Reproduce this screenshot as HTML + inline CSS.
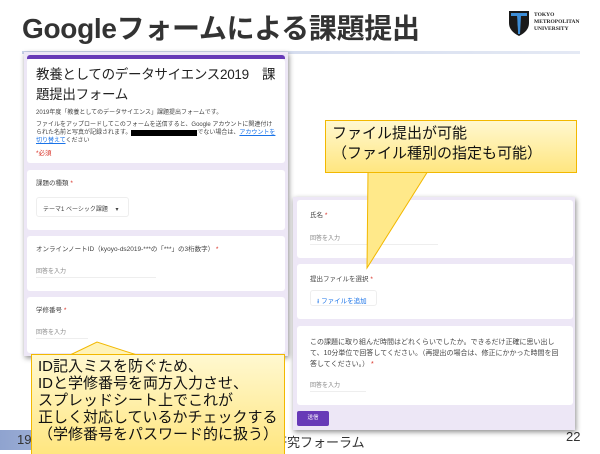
<!DOCTYPE html>
<html><head><meta charset="utf-8"><style>
*{margin:0;padding:0;box-sizing:border-box}
body{width:600px;height:450px;position:relative;overflow:hidden;background:#fff;font-family:"Liberation Sans","Noto Sans CJK JP",sans-serif;color:#222}
.abs{position:absolute}
.form{background:#ede7f6;box-shadow:1px 2px 5px rgba(0,0,0,.45)}
.card{position:absolute;background:#fff;border-radius:3px}
.s{font-size:6.5px;color:#444;line-height:9px}
.ph{font-size:6px;color:#888;border-bottom:1px solid #eee;padding-bottom:2px}
.r{color:#d93025}
.call{background:linear-gradient(#fff8d0,#ffe680);border:1px solid #f2b800;font-size:15px;line-height:17px;color:#111;padding:2px 6px}
</style></head><body>
<div class="abs" style="left:22px;top:7px;font-size:28px;font-weight:bold;color:#333;letter-spacing:-0.3px">Googleフォームによる課題提出</div>
<div class="abs" style="left:22px;top:51px;width:558px;height:3px;background:linear-gradient(90deg,#c8d2ea,#e4e9f4)"></div>
<svg class="abs" style="left:508px;top:9px" width="22" height="28" viewBox="0 0 22 28"><path d="M1 2 L21 2 L21 14 Q21 22 11 27 Q1 22 1 14Z" fill="#1a1a1a"/><path d="M3 4 L19 4 L19 7 L13 7 L12 25 L10 25 L9 7 L3 7Z" fill="#3d8ed8"/><path d="M3 7 L9 7 L10 24 Q3 20 3 14Z" fill="#1a1a1a"/></svg>
<div class="abs" style="left:534px;top:12px;font-family:'Liberation Serif',serif;font-size:5.5px;font-weight:bold;line-height:7px;color:#222">TOKYO<br>METROPOLITAN<br>UNIVERSITY</div>

<div class="abs" style="left:0;top:430px;width:260px;height:20px;background:linear-gradient(90deg,#8fa3cf,#c8d3ea 70%,#fff)"></div>
<div class="abs" style="left:17px;top:432px;font-size:13px;color:#333">19</div>
<div class="abs" style="left:248px;top:432px;font-size:13px;color:#333">教育研究フォーラム</div>
<div class="abs" style="left:566px;top:429px;font-size:13px;color:#333">22</div>

<div class="abs form" style="left:24px;top:52px;width:264px;height:304px">
 <div class="abs" style="left:3px;top:3px;width:258px;height:4px;background:#673ab7;border-radius:3px 3px 0 0"></div>
 <div class="card" style="left:3px;top:7px;width:258px;height:104px;padding:6px 9px">
  <div style="font-size:13.5px;line-height:20px;color:#222;white-space:nowrap;letter-spacing:-0.3px">教養としてのデータサイエンス2019　課<br>題提出フォーム</div>
  <div class="s" style="margin-top:4px;font-size:6px">2019年度「教養としてのデータサイエンス」課題提出フォームです。</div>
  <div class="s" style="margin-top:3px;font-size:6px;line-height:8px">ファイルをアップロードしてこのフォームを送信すると、Google アカウントに関連付けられた名前と写真が記録されます。<span style="background:#000;color:#000">xxxxxxxxxxxxxxxxxxxxxx</span>でない場合は、<span style="color:#1a73e8;text-decoration:underline">アカウントを切り替えて</span>ください</div>
  <div class="s r" style="margin-top:4px">*必須</div>
 </div>
 <div class="card" style="left:3px;top:118px;width:258px;height:60px;padding:9px 9px">
  <div class="s">課題の種類 <span class="r">*</span></div>
  <div style="margin-top:9px;width:93px;height:20px;border:1px solid #eee;border-radius:3px;font-size:6px;color:#444;padding:6px 6px">テーマ1 ベーシック課題　&nbsp;▾</div>
 </div>
 <div class="card" style="left:3px;top:184px;width:258px;height:55px;padding:9px 9px">
  <div class="s">オンラインノートID（kyoyo-ds2019-***の「***」の3桁数字） <span class="r">*</span></div>
  <div class="ph" style="margin-top:12px;width:120px">回答を入力</div>
 </div>
 <div class="card" style="left:3px;top:245px;width:258px;height:56px;padding:9px 9px">
  <div class="s">学修番号 <span class="r">*</span></div>
  <div class="ph" style="margin-top:12px;width:52px">回答を入力</div>
 </div>
</div>

<div class="abs form" style="left:293px;top:197px;width:282px;height:233px">
 <div class="card" style="left:4px;top:3px;width:276px;height:58px;padding:11px 13px">
  <div class="s">氏名 <span class="r">*</span></div>
  <div class="ph" style="margin-top:13px;width:128px">回答を入力</div>
 </div>
 <div class="card" style="left:4px;top:67px;width:276px;height:55px;padding:11px 13px">
  <div class="s">提出ファイルを選択 <span class="r">*</span></div>
  <div style="margin-top:6px;width:67px;height:16px;border:1px solid #eee;border-radius:3px;font-size:6.5px;color:#1a73e8;padding:4px 6px">⭳ ファイルを追加</div>
 </div>
 <div class="card" style="left:4px;top:129px;width:276px;height:79px;padding:11px 13px">
  <div class="s" style="font-size:7px;line-height:11px">この課題に取り組んだ時間はどれくらいでしたか。できるだけ正確に思い出して、10分単位で回答してください。（再提出の場合は、修正にかかった時間を回答してください。） <span class="r">*</span></div>
  <div class="ph" style="margin-top:10px;width:56px">回答を入力</div>
 </div>
 <div class="abs" style="left:4px;top:214px;width:32px;height:15px;background:#673ab7;border-radius:2px;color:#fff;font-size:5.5px;text-align:center;line-height:15px">送信</div>
</div>

<svg class="abs" style="left:360px;top:171px" width="70" height="100"><path d="M8 0 L68 0 L7 97 Z" fill="#ffe98a" stroke="#f2b800" stroke-width="1"/><rect x="9" y="0" width="58" height="2" fill="#ffe98a"/></svg>
<div class="abs call" style="left:325px;top:120px;width:252px;height:53px;padding-top:3px;line-height:20px">ファイル提出が可能<br>（ファイル種別の指定も可能）</div>

<svg class="abs" style="left:60px;top:341px" width="90" height="16"><path d="M8 15 L37 1 L80 15 Z" fill="#fff3b8" stroke="#f2b800" stroke-width="1"/></svg>
<div class="abs call" style="left:31px;top:354px;width:254px;height:100px;border-bottom:none;padding-top:3px">ID記入ミスを防ぐため、<br>IDと学修番号を両方入力させ、<br>スプレッドシート上でこれが<br>正しく対応しているかチェックする<br>（学修番号をパスワード的に扱う）</div>
</body></html>
